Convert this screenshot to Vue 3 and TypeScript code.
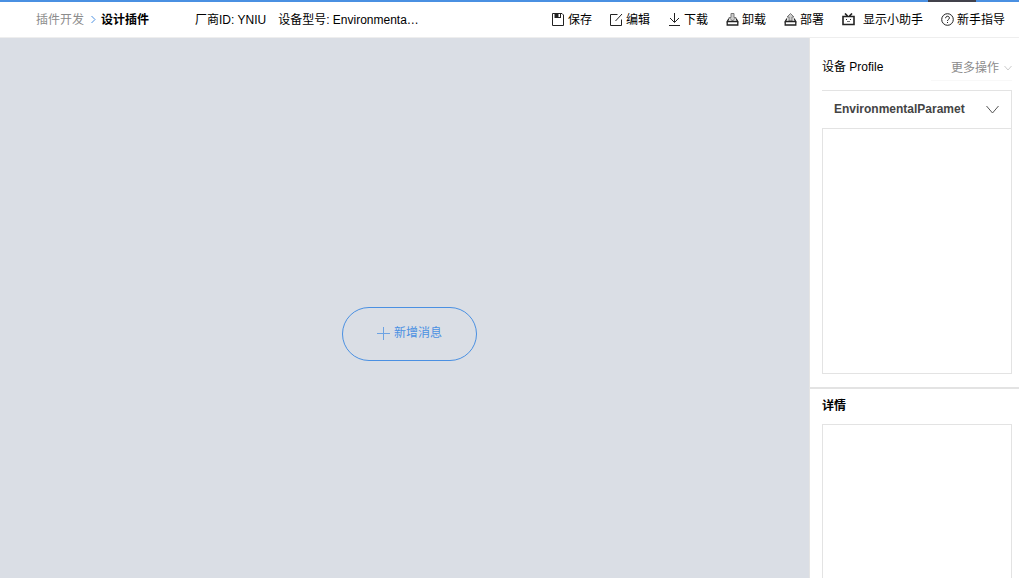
<script setup lang="ts">
import { ref } from 'vue'

interface Tool {
  id: string
  label: string
  wide?: boolean
}

const tools: Tool[] = [
  { id: 'save', label: '保存' },
  { id: 'edit', label: '编辑' },
  { id: 'download', label: '下载' },
  { id: 'uninstall', label: '卸载' },
  { id: 'deploy', label: '部署' },
  { id: 'assistant', label: '显示小助手', wide: true },
  { id: 'guide', label: '新手指导' },
]

const profile = ref('EnvironmentalParamet')
</script>

<template>
  <div class="page">
    <div class="accent"><span class="accent-mark"></span></div>
    <header class="topbar">
      <nav class="crumbs">
        <a href="#" class="crumb">插件开发</a>
        <svg class="crumb-arrow" width="5" height="9" viewBox="0 0 5 9"><path d="M.5 1 4 4.5.5 8" /></svg>
        <strong class="current">设计插件</strong>
      </nav>
      <div class="meta">
        <span>厂商ID: YNIU</span>
        <span>设备型号: Environmenta…</span>
      </div>
      <div class="tools">
        <button v-for="t in tools" :key="t.id" type="button" class="tool" :class="{ wide: t.wide }">
          <svg class="icon" width="13" height="13" viewBox="0 0 13 13">
            <template v-if="t.id === 'save'">
              <path d="M.5.5H10L11.500 2v10.500H.5z" />
              <path class="solid" d="M2.500 0H9v5H2.500z" />
              <path class="hole" d="M6.500 1H8v3H6.500z" />
            </template>
            <template v-else-if="t.id === 'edit'">
              <path d="M7.5 1.5h-7v11h11v-6M12 1 5.5 8" />
            </template>
            <template v-else-if="t.id === 'download'">
              <path d="M6.5 0v9M2 5l4.500 4.500L11 5M1 12.500h11" />
            </template>
            <template v-else-if="t.id === 'uninstall'">
              <path class="soft" d="M5 .5h3v4h2L6.500 8 3 4.500h2z" />
              <path class="frame" d="M3 5.500 1.200 8.500h10.600L10 5.500M1.200 8.500v3.500h10.600V8.500" />
            </template>
            <template v-else-if="t.id === 'deploy'">
              <path class="soft" d="M5 8V4H3L6.500.5 10 4H8v4z" />
              <path class="frame" d="M3 5.500 1.200 8.500h10.600L10 5.500M1.200 8.500v3.500h10.600V8.500" />
            </template>
            <template v-else-if="t.id === 'assistant'">
              <path class="heavy" d="M1 3.500h11v8H1zM3 .5l2.500 2.500M10 .5 7.500 3" />
              <path class="solid" d="M4 6h1v1H4zM8 6h1v1H8z" />
              <path class="mouth" d="M5 8.500h3" />
            </template>
            <template v-else>
              <circle cx="6.500" cy="6.500" r="5.800" />
              <path d="M4.600 5.200c0-2.600 3.800-2.600 3.800-.2 0 1.500-1.900 1.300-1.900 3M6.500 9v1" />
            </template>
          </svg>
          <span>{{ t.label }}</span>
        </button>
      </div>
    </header>

    <div class="body">
      <main class="canvas">
        <button type="button" class="add">
          <svg width="13" height="13" viewBox="0 0 13 13"><path d="M6.500 0v13M0 6.500h13" /></svg>
          <span>新增消息</span>
        </button>
      </main>
      <aside class="side">
        <section class="profile">
          <div class="side-head">
            <h2>设备 Profile</h2>
            <button type="button" class="more">
              <span>更多操作</span>
              <svg width="8" height="6" viewBox="0 0 8 6"><path d="M.5 1 4 5l3.500-4" /></svg>
            </button>
          </div>
          <div class="picker">
            <select v-model="profile" aria-label="设备 Profile">
              <option value="EnvironmentalParamet">EnvironmentalParamet</option>
            </select>
            <svg width="13" height="9" viewBox="0 0 13 9"><path d="M.5 1 6.500 8l6-7" /></svg>
          </div>
          <div class="list"></div>
        </section>
        <section class="details">
          <h2 class="strong">详情</h2>
          <div class="detail-box"></div>
        </section>
      </aside>
    </div>
  </div>
</template>

<style>
body {
  margin: 0;
  overflow: hidden;
}
</style>

<style scoped>
.page {
  display: flex;
  flex-direction: column;
  height: 100vh;
  background: #fff;
  color: #000;
  font: 12px/18px "Liberation Sans", "Noto Sans CJK SC", sans-serif;
}
.page * {
  box-sizing: border-box;
}
svg {
  display: block;
  flex: none;
  fill: none;
}
button {
  padding: 0;
  border: 0;
  background: none;
  color: inherit;
  font: inherit;
  cursor: pointer;
}
.accent {
  display: flex;
  justify-content: flex-end;
  flex: none;
  height: 2px;
  padding-right: 43px;
  background: #4a90e2;
}
.accent-mark {
  width: 48px;
  background: #41414b;
}
.topbar {
  display: flex;
  align-items: center;
  flex: none;
  height: 36px;
  padding: 0 14px 0 36px;
  border-bottom: 1px solid #eee;
  white-space: nowrap;
}
.crumbs {
  display: flex;
  align-items: center;
}
.crumb {
  color: #8c8c8c;
  text-decoration: none;
}
.crumb-arrow {
  margin: 0 5px 0 7px;
  stroke: #4a90e2;
}
.current {
  font-weight: 700;
}
.meta {
  display: flex;
  gap: 12px;
  margin-left: 46px;
}
.tools {
  display: flex;
  gap: 18px;
  margin-left: auto;
}
.tool {
  display: flex;
  align-items: center;
  gap: 3px;
}
.tool.wide {
  gap: 8px;
}
.icon {
  stroke: #222;
}
.icon .solid {
  fill: #222;
  stroke: none;
}
.icon .hole {
  fill: #fff;
  stroke: none;
}
.icon .soft {
  fill: #ccc;
  stroke: #777;
}
.icon .frame {
  stroke-width: 1.3;
}
.icon .heavy {
  stroke-width: 1.6;
}
.icon .mouth {
  stroke: #777;
}
.body {
  display: flex;
  flex: 1;
  min-height: 0;
}
.canvas {
  display: flex;
  align-items: center;
  justify-content: center;
  flex: 1;
  padding: 52px 0 0 10px;
  background: #dadee5;
}
.add {
  display: flex;
  align-items: center;
  justify-content: center;
  gap: 4px;
  width: 135px;
  height: 54px;
  padding-bottom: 2px;
  border: 1px solid #4a90e2;
  border-radius: 27px;
  color: #4a90e2;
}
.add svg {
  stroke: #6da3e3;
}
.side {
  display: flex;
  flex-direction: column;
  width: 210px;
  border-left: 1px solid #e4e4e4;
}
.profile {
  flex: none;
  padding: 14px 7px 13px 12px;
  border-bottom: 2px solid #e3e3e3;
}
.side-head {
  display: flex;
  align-items: center;
  justify-content: space-between;
  height: 38px;
  padding-bottom: 8px;
}
h2 {
  margin: 0;
  font-size: 12px;
  font-weight: 400;
}
h2.strong {
  font-weight: 700;
}
.more {
  display: flex;
  align-items: center;
  justify-content: flex-end;
  gap: 5px;
  width: 81px;
  height: 28px;
  padding-top: 2px;
  border-bottom: 1px solid #f8f8f8;
  color: #8c8c8c;
}
.more svg {
  stroke: #ccc;
}
.picker {
  display: grid;
  align-items: center;
  height: 38px;
  border: 1px solid #e3e3e3;
  border-width: 1px 1px 0 0;
}
.picker select,
.picker svg {
  grid-area: 1 / 1;
}
.picker select {
  width: 100%;
  height: 37px;
  padding: 0 32px 2px 12px;
  border: 0;
  background: none;
  color: #444;
  font: 700 12px/18px "Liberation Sans", "Noto Sans CJK SC", sans-serif;
  appearance: none;
}
.picker svg {
  justify-self: end;
  margin-right: 12px;
  stroke: #555;
  pointer-events: none;
}
.list {
  height: 246px;
  border: 1px solid #e3e3e3;
}
.details {
  display: flex;
  flex-direction: column;
  flex: 1;
  gap: 9px;
  padding: 8px 7px 0 12px;
}
.detail-box {
  flex: 1;
  border: 1px solid #e3e3e3;
  border-bottom: 0;
}
</style>
